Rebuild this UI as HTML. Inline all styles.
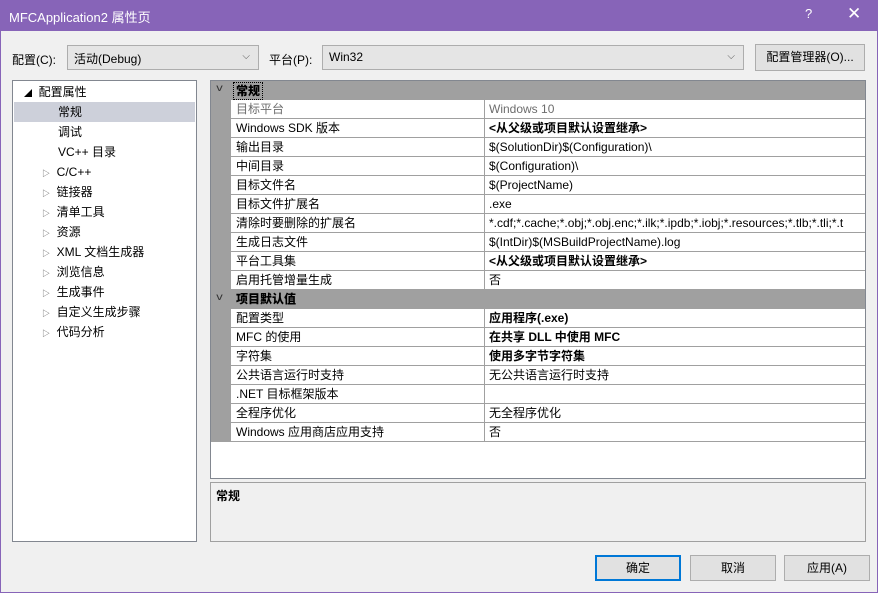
<!DOCTYPE html><html><head><meta charset="utf-8"><style>
*{box-sizing:border-box;margin:0;padding:0}
body{width:878px;height:593px;background:#f0f0f0;font:12px "Liberation Sans","Noto Sans CJK SC",sans-serif;color:#000;position:relative;overflow:hidden}
.a{position:absolute}
.frame{position:absolute;left:0;top:0;width:878px;height:593px;border:1px solid #8764b8;pointer-events:none}
.t{position:absolute;left:0;top:0;width:878px;height:31px;background:#8764b8;color:#fff;font-size:13px}
.combo{position:absolute;height:25px;background:#e5e5e5;border:1px solid #adadad;padding:4px 6px}
.combo i{position:absolute;right:8px;top:5px;font-style:normal;color:#555;font-size:10px}
.btn{position:absolute;background:#e1e1e1;border:1px solid #adadad;text-align:center;line-height:24px}
.tree{position:absolute;left:12px;top:80px;width:185px;height:462px;background:#fff;border:1px solid #828790}
.tree div{position:absolute;height:20px;line-height:20px;width:181px;left:1px}
.grid{position:absolute;left:210px;top:80px;width:656px;height:399px;background:#fff;border:1px solid #828790}
.r{position:absolute;left:0;width:654px;height:19px;line-height:18px}
.r .n{position:absolute;left:20px;width:254px;height:19px;padding-left:5px;border-bottom:1px solid #a0a0a0;border-right:1px solid #a0a0a0;background:#fff}
.r .v{position:absolute;left:274px;width:380px;height:19px;padding-left:4px;border-bottom:1px solid #a0a0a0;background:#fff;white-space:nowrap;overflow:hidden}
.h{position:absolute;left:0;width:654px;height:19px;background:#a0a0a0;font-weight:bold;line-height:19px}
.h span{position:absolute;left:6px;top:-2px;font-weight:normal;font-size:10px;color:#333;transform:scaleX(1.3)}
.b{font-weight:bold}
</style></head><body>
<div class="t"><span class="a" style="left:9px;top:7px">MFCApplication2 属性页</span><span class="a" style="left:805px;top:6px">?</span><span class="a" style="left:847px;top:4px;font-size:17px">✕</span></div>
<span class="a" style="left:12px;top:51px">配置(C):</span>
<div class="combo" style="left:67px;top:45px;width:192px">活动(Debug)<i>⌵</i></div>
<span class="a" style="left:269px;top:51px">平台(P):</span>
<div class="combo" style="left:322px;top:45px;width:422px">Win32<i>⌵</i></div>
<div class="btn" style="left:755px;top:44px;width:110px;height:27px;line-height:25px">配置管理器(O)...</div>
<div class="tree">
<div style="top:1px;padding-left:10px"><span style="font-size:8px">◢</span>&nbsp; 配置属性</div>
<div style="top:21px;padding-left:44px;background:#cdd0da">常规</div>
<div style="top:41px;padding-left:44px">调试</div>
<div style="top:61px;padding-left:44px">VC++ 目录</div>
<div style="top:81px;padding-left:28px"><span style="font-size:8px;color:#555">▷</span>&nbsp; C/C++</div>
<div style="top:101px;padding-left:28px"><span style="font-size:8px;color:#555">▷</span>&nbsp; 链接器</div>
<div style="top:121px;padding-left:28px"><span style="font-size:8px;color:#555">▷</span>&nbsp; 清单工具</div>
<div style="top:141px;padding-left:28px"><span style="font-size:8px;color:#555">▷</span>&nbsp; 资源</div>
<div style="top:161px;padding-left:28px"><span style="font-size:8px;color:#555">▷</span>&nbsp; XML 文档生成器</div>
<div style="top:181px;padding-left:28px"><span style="font-size:8px;color:#555">▷</span>&nbsp; 浏览信息</div>
<div style="top:201px;padding-left:28px"><span style="font-size:8px;color:#555">▷</span>&nbsp; 生成事件</div>
<div style="top:221px;padding-left:28px"><span style="font-size:8px;color:#555">▷</span>&nbsp; 自定义生成步骤</div>
<div style="top:241px;padding-left:28px"><span style="font-size:8px;color:#555">▷</span>&nbsp; 代码分析</div>
</div>
<div class="grid">
<div class="a" style="left:0;top:0;width:20px;height:361px;background:#a0a0a0"></div>
<div class="h" style="top:0"><span>v</span><b style="position:absolute;left:22px;border:1px dotted #000;padding:0 2px;line-height:16px;top:1px">常规</b></div>
<div class="r" style="top:19px;color:#6d6d6d"><div class="n">目标平台</div><div class="v">Windows 10</div></div>
<div class="r" style="top:38px"><div class="n">Windows SDK 版本</div><div class="v b">&lt;从父级或项目默认设置继承&gt;</div></div>
<div class="r" style="top:57px"><div class="n">输出目录</div><div class="v">$(SolutionDir)$(Configuration)\</div></div>
<div class="r" style="top:76px"><div class="n">中间目录</div><div class="v">$(Configuration)\</div></div>
<div class="r" style="top:95px"><div class="n">目标文件名</div><div class="v">$(ProjectName)</div></div>
<div class="r" style="top:114px"><div class="n">目标文件扩展名</div><div class="v">.exe</div></div>
<div class="r" style="top:133px"><div class="n">清除时要删除的扩展名</div><div class="v">*.cdf;*.cache;*.obj;*.obj.enc;*.ilk;*.ipdb;*.iobj;*.resources;*.tlb;*.tli;*.t</div></div>
<div class="r" style="top:152px"><div class="n">生成日志文件</div><div class="v">$(IntDir)$(MSBuildProjectName).log</div></div>
<div class="r" style="top:171px"><div class="n">平台工具集</div><div class="v b">&lt;从父级或项目默认设置继承&gt;</div></div>
<div class="r" style="top:190px"><div class="n">启用托管增量生成</div><div class="v">否</div></div>
<div class="h" style="top:209px"><span>v</span><b style="position:absolute;left:25px">项目默认值</b></div>
<div class="r" style="top:228px"><div class="n">配置类型</div><div class="v b">应用程序(.exe)</div></div>
<div class="r" style="top:247px"><div class="n">MFC 的使用</div><div class="v b">在共享 DLL 中使用 MFC</div></div>
<div class="r" style="top:266px"><div class="n">字符集</div><div class="v b">使用多字节字符集</div></div>
<div class="r" style="top:285px"><div class="n">公共语言运行时支持</div><div class="v">无公共语言运行时支持</div></div>
<div class="r" style="top:304px"><div class="n">.NET 目标框架版本</div><div class="v"></div></div>
<div class="r" style="top:323px"><div class="n">全程序优化</div><div class="v">无全程序优化</div></div>
<div class="r" style="top:342px"><div class="n">Windows 应用商店应用支持</div><div class="v">否</div></div>
</div>
<div class="a" style="left:210px;top:482px;width:656px;height:60px;border:1px solid #a0a0a0;background:#f0f0f0"><b class="a" style="left:5px;top:4px">常规</b></div>
<div class="btn" style="left:595px;top:555px;width:86px;height:26px;border:2px solid #0078d7;line-height:22px">确定</div>
<div class="btn" style="left:690px;top:555px;width:86px;height:26px">取消</div>
<div class="btn" style="left:784px;top:555px;width:86px;height:26px">应用(A)</div>
<div class="frame"></div>
</body></html>
